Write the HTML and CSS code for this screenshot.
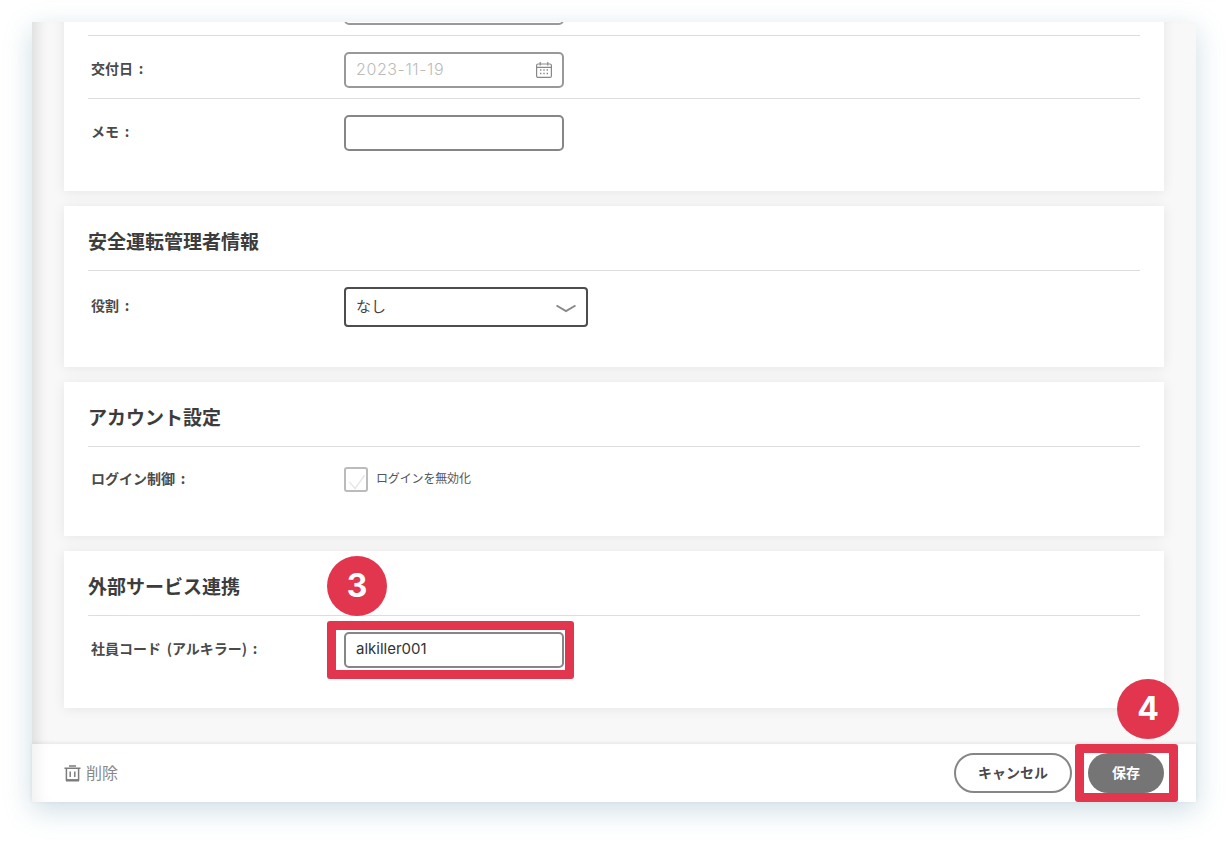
FILE: index.html
```html
<!DOCTYPE html>
<html lang="ja">
<head>
<meta charset="utf-8">
<title>ドライバー編集</title>
<link rel="stylesheet" href="styles.css">
</head>
<body>
<div class="window">
  <main class="content">
    <section class="card">
      <div class="row row-first">
        <div class="label"></div>
        <div class="input"></div>
      </div>
      <div class="row">
        <div class="label">交付日 :</div>
        <div class="input input-date">
          <span class="placeholder">2023-11-19</span>
          <svg class="calendar" width="18" height="18" viewBox="0 0 18 18" fill="none" stroke="#888" stroke-width="1.2">
            <rect x="1.6" y="3" width="14.8" height="13.4" rx="1.5"/>
            <path d="M1.6 6.4h14.8M5.2 1v3.4M12.8 1v3.4"/>
            <path d="M5 9h1.4M8.3 9h1.4M11.6 9h1.4M5 12.6h1.4M8.3 12.6h1.4M11.6 12.6h1.4" stroke-width="1.5"/>
          </svg>
        </div>
      </div>
      <div class="row row-last">
        <div class="label">メモ :</div>
        <div class="input input-dark"></div>
      </div>
    </section>
    <section class="card">
      <h2 class="card-title">安全運転管理者情報</h2>
      <div class="row row-last">
        <div class="label label-select">役割 :</div>
        <div class="select">
          <span class="select-value">なし</span>
          <svg class="chevron" width="20" height="9" viewBox="0 0 20 9" fill="none" stroke="#888" stroke-width="2">
            <path d="M0.5 1.5l9.5 5.6 9.5-5.6"/>
          </svg>
        </div>
      </div>
    </section>
    <section class="card">
      <h2 class="card-title">アカウント設定</h2>
      <div class="row row-check">
        <div class="label label-check">ログイン制御 :</div>
        <div class="check-wrap">
          <span class="checkbox">
            <svg width="21" height="21" viewBox="0 0 21 21" fill="none" stroke="#e6e6e6" stroke-width="1.5">
              <path d="M3.5 13l6 7L19.5 6"/>
            </svg>
          </span>
          <span class="check-text">ログインを無効化</span>
        </div>
      </div>
    </section>
    <section class="card">
      <h2 class="card-title">外部サービス連携</h2>
      <div class="row row-last">
        <div class="label">社員コード (アルキラー) :</div>
        <div class="input input-dark input-value">alkiller001</div>
      </div>
    </section>
  </main>
  <footer class="footer">
    <div class="delete">
      <svg width="17" height="17" viewBox="0 0 17 17" fill="none" stroke="#7c7c7c" stroke-width="1.5">
        <path d="M0.5 3.2h16M5 1h7M2.4 3.2v11.8h12.2V3.2M6.2 6.5v5.6M10.8 6.5v5.6"/>
        <path d="M2 15.4h13" stroke-width="2.2"/>
      </svg>
      <span class="delete-text">削除</span>
    </div>
    <div class="actions">
      <button class="btn btn-outline"><span class="btn-text">キャンセル</span></button>
      <button class="btn btn-solid"><span class="btn-text">保存</span></button>
    </div>
  </footer>
</div>
<div class="frame frame-code"></div>
<div class="frame frame-save"></div>
<div class="badge badge-three">3</div>
<div class="badge badge-four">4</div>
</body>
</html>
```
FILE: styles.css
```css
* { box-sizing: border-box; }
html, body { margin: 0; padding: 0; }
body {
  position: relative;
  width: 1228px;
  height: 844px;
  overflow: hidden;
  background: #fff;
  font-family: "Noto Sans CJK JP", "Noto Sans", sans-serif;
  color: #444;
}
.window {
  width: 1164px;
  height: 780px;
  margin: 22px 32px 0;
  display: flex;
  flex-direction: column;
  box-shadow: 0 8px 26px rgba(90, 145, 165, .3);
}
.content {
  flex: 1;
  min-height: 0;
  overflow: hidden;
  display: flex;
  flex-direction: column;
  justify-content: flex-end;
  gap: 15px;
  padding: 0 32px 36px;
  background: #f8f8f8;
  box-shadow: inset 14px 0 12px -8px rgba(0, 0, 0, .1);
}
.card {
  flex: none;
  padding: 0 24px;
  background: #fff;
  box-shadow: 0 1px 12px rgba(0, 0, 0, .08);
}
.card-title {
  height: 64px;
  margin: 0;
  padding-top: 21px;
  font-size: 19px;
  line-height: 28px;
  font-weight: 700;
  color: #3c3c3c;
}
.row {
  display: flex;
  align-items: flex-start;
  padding: 16px 0 10px;
  border-top: 1px solid #ddd;
}
.row-first { border-top: 0; }
.row-last { padding-bottom: 40px; }
.row-check { padding: 20px 0 44px; }
.label {
  flex: none;
  width: 256px;
  height: 36px;
  padding-left: 3px;
  font-size: 14px;
  line-height: 33px;
  font-weight: 700;
  color: #4a4a4a;
  word-spacing: 2.5px;
}
.label-select { line-height: 37px; }
.label-check { height: 24px; line-height: 22px; }
.input {
  width: 220px;
  height: 36px;
  padding: 0 10px;
  display: flex;
  align-items: center;
  justify-content: space-between;
  border: 2px solid #999;
  border-radius: 5px;
  background: #fff;
}
.input-dark { border-color: #868686; }
.input-date { padding-right: 9px; }
.placeholder {
  margin-top: -3px;
  font-family: "Inter", sans-serif;
  font-size: 16px;
  font-weight: 300;
  letter-spacing: .6px;
  color: #bbb;
}
.input-value {
  padding-bottom: 3px;
  font-family: "Inter", sans-serif;
  font-size: 15px;
  color: #333;
}
.select {
  width: 244px;
  height: 40px;
  padding: 0 10px;
  display: flex;
  align-items: center;
  justify-content: space-between;
  border: 2px solid #4d4d4d;
  border-radius: 4px;
  font-size: 15px;
  color: #444;
}
.select-value { margin-top: -3px; }
.chevron { margin-top: 3px; }
.check-wrap {
  display: flex;
  align-items: center;
  gap: 8px;
}
.checkbox {
  width: 24px;
  height: 25px;
  display: flex;
  align-items: center;
  justify-content: center;
  border: 2px solid #bbb;
  border-radius: 3px;
}
.check-text {
  margin-top: -5px;
  font-size: 12px;
  letter-spacing: -.15px;
  color: #555;
}
.footer {
  flex: none;
  height: 58px;
  padding: 0 32px;
  display: flex;
  align-items: center;
  justify-content: space-between;
  position: relative;
  background: #fff;
  box-shadow: inset 14px 0 14px -8px rgba(0, 0, 0, .06), 0 -1px 4px rgba(0, 0, 0, .08);
}
.delete {
  display: flex;
  align-items: center;
  gap: 5px;
  font-size: 16px;
  color: #888;
}
.delete-text { margin-top: -3px; }
.actions {
  display: flex;
  gap: 16px;
}
.btn {
  height: 40px;
  border-radius: 20px;
  font-family: inherit;
  font-size: 14px;
  font-weight: 700;
  padding: 0 0 3px;
}
.btn-outline {
  width: 118px;
  background: #fff;
  border: 2px solid #868686;
  color: #4a4a4a;
}
.btn-solid {
  width: 76px;
  background: #757575;
  border: 0;
  color: #fff;
}
.frame {
  position: absolute;
  border: 9px solid #e1364e;
  border-radius: 3px;
}
.frame-code { left: 327px; top: 621px; width: 247px; height: 58px; }
.frame-save { left: 1075px; top: 744px; width: 103px; height: 58px; }
.badge {
  position: absolute;
  display: flex;
  align-items: center;
  justify-content: center;
  border-radius: 50%;
  background: #e1364e;
  color: #fff;
  font-family: "Inter", sans-serif;
  font-weight: 700;
  font-size: 32px;
  padding-bottom: 2px;
}
.badge-three { left: 327px; top: 556px; width: 60px; height: 60px; }
.badge-four { left: 1117px; top: 679px; width: 62px; height: 60px; }
```
